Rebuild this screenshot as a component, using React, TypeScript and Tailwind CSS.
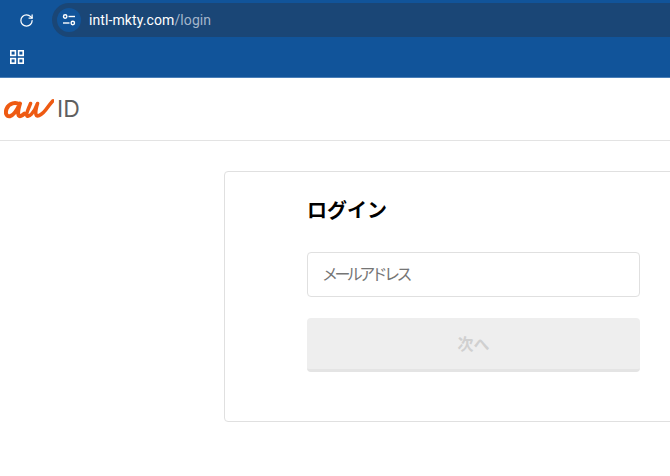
import { RotateCw } from "lucide-react";

const cjk = "font-['Liberation_Sans','Noto_Sans_CJK_JP',sans-serif]";

const BrowserBar = () => {
  return (
    <div className="h-[78px] bg-[#11549a] border-b border-[#4a7fb8] flex flex-col">
      <div className="flex items-center h-[34px] mt-[3px]">
        <div className="w-[52px] flex justify-center">
          <RotateCw size={15} strokeWidth={2} color="#ffffff" />
        </div>
        <div className="flex-1 h-[34px] bg-[#1a4676] rounded-l-[17px] flex items-center pl-[5px]">
          <div className="w-[24px] h-[24px] rounded-full bg-[#11549a] flex items-center justify-center">
            <svg width="14" height="14" viewBox="0 0 14 14" fill="none" stroke="#ffffff" strokeWidth="1.4">
              <circle cx="3.2" cy="3.5" r="1.7" />
              <path d="M6.5 3.5H13" />
              <circle cx="10.8" cy="10" r="1.7" />
              <path d="M1 10H7.5" />
            </svg>
          </div>
          <span className="ml-[8px] text-[14px] tracking-[0.1px] text-white font-['Roboto',sans-serif]">
            intl-mkty.com<span className="text-[#a3b5ca]">/login</span>
          </span>
        </div>
      </div>
      <div className="flex-1 flex items-center pl-[10px]">
        <svg width="14" height="14" viewBox="0 0 14 14" fill="none" stroke="#ffffff" strokeWidth="1.6">
          <rect x="0.8" y="0.8" width="4.6" height="4.6" />
          <rect x="8.6" y="0.8" width="4.6" height="4.6" />
          <rect x="0.8" y="8.6" width="4.6" height="4.6" />
          <rect x="8.6" y="8.6" width="4.6" height="4.6" />
        </svg>
      </div>
    </div>
  );
};

const Logo = () => {
  return (
    <div className="flex items-center pl-[4px]">
      <svg width="50" height="22" viewBox="0 0 50 22" fill="none" stroke="#ee5a12" strokeWidth="4" strokeLinecap="round" strokeLinejoin="round">
        <path d="M15.5 6.5C12 4 5 4.5 2.5 11C1 15.5 2.5 18.8 6 18.2C9.5 17.5 13.5 11 16 5.5C14.5 10.5 13.5 15.5 14.7 17.5C15.7 18.8 18 18 20.5 15.5" />
        <path d="M26.5 5.5C25 10 21.5 15.5 23 17.8C25 19.5 30 15 33.5 5.5C32 10.5 31 15.5 32.5 17.5C34.5 19 39 15.5 42 11.5C44 8.8 46.5 5.5 49 2.8" strokeWidth="3.6" />
      </svg>
      <span className="ml-[3px] text-[23px] leading-none text-[#5f5f5f] font-['Inter',sans-serif]">ID</span>
    </div>
  );
};

export default function App() {
  return (
    <div className={`w-[670px] h-[476px] overflow-hidden bg-white ${cjk}`}>
      <BrowserBar />
      <div className="h-[63px] border-b border-[#e3e3e3] flex items-center">
        <Logo />
      </div>
      <div className="pt-[30px] pl-[224px]">
        <div className="w-[600px] h-[251px] border border-[#e0e0e0] rounded-[4px] pl-[82px] pt-[25px]">
          <h1 className="text-[20px] leading-[28px] font-bold text-black">ログイン</h1>
          <div className="w-[333px] h-[45px] mt-[27px] border border-[#e0e0e0] rounded-[4px] flex items-center pl-[14px] text-[16px] tracking-[-3.6px] text-[#757575]">
            メールアドレス
          </div>
          <button className="w-[333px] h-[54px] mt-[21px] pt-[3px] bg-[#eeeeee] border-b-[3px] border-[#e4e4e4] rounded-[4px] text-[16px] font-bold text-[#d0d0d0]">
            次へ
          </button>
        </div>
      </div>
    </div>
  );
}
